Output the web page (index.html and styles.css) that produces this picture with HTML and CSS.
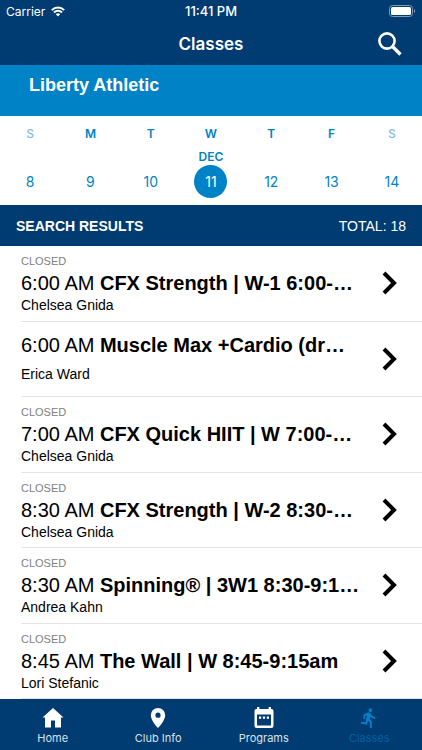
FILE: index.html
```html
<!DOCTYPE html>
<html lang="en">
<head>
    <meta charset="UTF-8">
    <meta name="viewport" content="width=device-width, initial-scale=1.0">
    <title>Classes</title>
    <link rel="stylesheet" href="styles.css">
</head>
<body>
    <header class="header">
        <div class="status">
            <div class="carrier">
                <span>Carrier</span>
                <svg width="14" height="11" viewBox="0 0 14 11" fill="none" stroke="#fff" stroke-width="2">
                    <path d="M0.8 4.1a8.8 8.8 0 0 1 12.4 0M3 6.5a5.6 5.6 0 0 1 8 0"/>
                    <path d="M7 10.6 4.8 8.3a3.2 3.2 0 0 1 4.4 0z" fill="#fff" stroke="none"/>
                </svg>
            </div>
            <span class="clock">11:41 PM</span>
            <svg class="battery" width="27" height="12" viewBox="0 0 27 12">
                <rect x="0.5" y="0.5" width="23" height="11" rx="3" fill="none" stroke="#7f9cb7"/>
                <rect x="2" y="2" width="20" height="8" rx="1.5" fill="#fff"/>
                <path d="M25 4c1.6.5 1.6 3.5 0 4z" fill="#7f9cb7"/>
            </svg>
        </div>
        <div class="titlebar">
            <h1>Classes</h1>
            <button class="search" type="button" aria-label="Search">
                <svg width="24" height="24" viewBox="0 0 24 24" fill="none" stroke="#fff">
                    <circle cx="9" cy="9" r="7.6" stroke-width="2.6"/>
                    <path d="M14.5 14.5 22.5 22.5" stroke-width="3.4"/>
                </svg>
            </button>
        </div>
    </header>

    <h2 class="club">Liberty Athletic</h2>

    <div class="week">
        <div class="day weekend"><span class="name">S</span><span class="month"></span><button type="button">8</button></div>
        <div class="day"><span class="name">M</span><span class="month"></span><button type="button">9</button></div>
        <div class="day"><span class="name">T</span><span class="month"></span><button type="button">10</button></div>
        <div class="day selected"><span class="name">W</span><span class="month">DEC</span><button type="button">11</button></div>
        <div class="day"><span class="name">T</span><span class="month"></span><button type="button">12</button></div>
        <div class="day"><span class="name">F</span><span class="month"></span><button type="button">13</button></div>
        <div class="day weekend"><span class="name">S</span><span class="month"></span><button type="button">14</button></div>
    </div>

    <div class="results">
        <h2>SEARCH RESULTS</h2>
        <span>TOTAL: 18</span>
    </div>

    <ul class="classes">
        <li>
            <div class="info">
                <p class="state">CLOSED</p>
                <p class="title">6:00 AM <b>CFX Strength | W-1 6:00-…</b></p>
                <p class="coach">Chelsea Gnida</p>
            </div>
            <svg class="chevron" viewBox="0 0 16 24"><path d="M2 2 12 12 2 22"/></svg>
        </li>
        <li class="open">
            <div class="info">
                <p class="title">6:00 AM <b>Muscle Max +Cardio (dr…</b></p>
                <p class="coach">Erica Ward</p>
            </div>
            <svg class="chevron" viewBox="0 0 16 24"><path d="M2 2 12 12 2 22"/></svg>
        </li>
        <li>
            <div class="info">
                <p class="state">CLOSED</p>
                <p class="title">7:00 AM <b>CFX Quick HIIT | W 7:00-…</b></p>
                <p class="coach">Chelsea Gnida</p>
            </div>
            <svg class="chevron" viewBox="0 0 16 24"><path d="M2 2 12 12 2 22"/></svg>
        </li>
        <li>
            <div class="info">
                <p class="state">CLOSED</p>
                <p class="title">8:30 AM <b>CFX Strength | W-2 8:30-…</b></p>
                <p class="coach">Chelsea Gnida</p>
            </div>
            <svg class="chevron" viewBox="0 0 16 24"><path d="M2 2 12 12 2 22"/></svg>
        </li>
        <li>
            <div class="info">
                <p class="state">CLOSED</p>
                <p class="title">8:30 AM <b>Spinning® | 3W1 8:30-9:1…</b></p>
                <p class="coach">Andrea Kahn</p>
            </div>
            <svg class="chevron" viewBox="0 0 16 24"><path d="M2 2 12 12 2 22"/></svg>
        </li>
        <li>
            <div class="info">
                <p class="state">CLOSED</p>
                <p class="title">8:45 AM <b>The Wall | W 8:45-9:15am</b></p>
                <p class="coach">Lori Stefanic</p>
            </div>
            <svg class="chevron" viewBox="0 0 16 24"><path d="M2 2 12 12 2 22"/></svg>
        </li>
    </ul>

    <nav class="tabs">
        <a href="#home">
            <svg viewBox="0 0 22 22"><path d="M11 1 0.5 10.5h2.5V20.5h6V13.5h4v7h6V10.5h2.5z"/></svg>
            Home
        </a>
        <a href="#club">
            <svg viewBox="0 0 22 22"><path fill-rule="evenodd" d="M11 1a7.2 7.2 0 0 0-7.2 7.2C3.8 13.6 11 21 11 21s7.2-7.4 7.2-12.8A7.2 7.2 0 0 0 11 1zm0 4.6a2.6 2.6 0 1 1 0 5.2 2.6 2.6 0 0 1 0-5.2z"/></svg>
            Club Info
        </a>
        <a href="#programs">
            <svg viewBox="0 0 22 22"><path fill-rule="evenodd" d="M4 0h2.4v2h9.2V0H18v2h.5a2 2 0 0 1 2 2v15a2 2 0 0 1-2 2h-15a2 2 0 0 1-2-2V4a2 2 0 0 1 2-2H4zM4 7.5v11h14v-11zM6 9.500h2.200v2.200H6zm3.900 0h2.200v2.200H9.900zm3.900 0H16v2.200h-2.200z"/></svg>
            Programs
        </a>
        <a href="#classes" class="active">
            <svg viewBox="0 0 24 24"><path d="M13.49 5.48c1.1 0 2-.9 2-2s-.9-2-2-2-2 .9-2 2 .9 2 2 2zm-3.6 13.9 1-4.4 2.1 2v6h2v-7.500l-2.1-2 .6-3c1.300 1.500 3.300 2.500 5.500 2.500v-2c-1.900 0-3.500-1-4.300-2.400l-1-1.600c-.4-.6-1-1-1.700-1-.3 0-.5.1-.8.1l-5.200 2.200v4.700h2v-3.400l1.800-.7-1.600 8.100-4.900-1-.4 2z"/></svg>
            Classes
        </a>
    </nav>
</body>
</html>
```

FILE: styles.css
```css
* {
    box-sizing: border-box;
}

body {
    margin: 0;
    min-height: 100vh;
    display: flex;
    flex-direction: column;
    font-family: 'Liberation Sans', Arial, sans-serif;
    background-color: #fff;
    color: #000;
}

h1, h2, p, ul {
    margin: 0;
    padding: 0;
}

button {
    padding: 0;
    border: none;
    background: none;
    font-family: inherit;
    color: inherit;
    cursor: pointer;
}

.header {
    background-color: #003b71;
    color: #fff;
    font-family: Inter, sans-serif;
}

.status, .titlebar {
    display: grid;
    grid-template-columns: 1fr auto 1fr;
    align-items: center;
}

.status {
    height: 22px;
    padding: 0 6px;
    font-size: 12px;
}

.carrier {
    display: flex;
    align-items: center;
    gap: 6px;
}

.clock {
    font-size: 13px;
    font-weight: 500;
}

.battery {
    justify-self: end;
}

.titlebar {
    height: 43px;
    padding: 0 20px;
}

.titlebar h1 {
    grid-column: 2;
    font-size: 17px;
    font-weight: 600;
}

.search {
    justify-self: end;
    height: 24px;
}

.club {
    height: 51px;
    padding: 10px 29px;
    background-color: #0083c6;
    color: #fff;
    font-size: 18px;
    line-height: 20px;
}

.week {
    height: 89px;
    padding-top: 9px;
    display: grid;
    grid-template-columns: repeat(7, 1fr);
    font-family: Inter, sans-serif;
    color: #0083c6;
}

.day {
    display: flex;
    flex-direction: column;
    align-items: center;
}

.name, .month {
    font-size: 12px;
    font-weight: 600;
    line-height: 18px;
}

.name {
    height: 23px;
}

.month {
    height: 17px;
}

.weekend .name {
    color: #7fbfe0;
    font-weight: 500;
}

.day button {
    width: 33px;
    height: 33px;
    border-radius: 50%;
    font-size: 14px;
}

.selected button {
    background-color: #0083c6;
    color: #fff;
}

.results {
    height: 41px;
    padding: 0 16px;
    display: flex;
    justify-content: space-between;
    align-items: center;
    background-color: #003b71;
    color: #fff;
    font-size: 14px;
}

.results h2 {
    font-size: 14px;
}

.classes {
    flex: 1;
    display: grid;
    grid-auto-rows: 1fr;
    list-style: none;
}

.classes li {
    min-width: 0;
    display: flex;
    align-items: center;
    justify-content: space-between;
    margin-left: 21px;
    padding-right: 24px;
    border-bottom: 1px solid #e4e4e6;
}

.info {
    min-width: 0;
}

.state {
    color: #808080;
    font-size: 11px;
    line-height: 16px;
}

.title {
    overflow: hidden;
    font-size: 20px;
    line-height: 28px;
    white-space: nowrap;
    text-overflow: ellipsis;
}

.coach {
    font-size: 14px;
    line-height: 16px;
}

.open .info {
    display: flex;
    flex-direction: column;
    gap: 7px;
    padding-bottom: 4px;
}

.chevron {
    flex: none;
    width: 16px;
    height: 24px;
    fill: none;
    stroke: #000;
    stroke-width: 4;
}

.tabs {
    height: 51px;
    padding-top: 8px;
    display: grid;
    grid-template-columns: repeat(4, 1fr);
    background-color: #003b71;
    font-family: Inter, sans-serif;
    font-size: 11px;
    line-height: 16px;
}

.tabs a {
    display: flex;
    flex-direction: column;
    align-items: center;
    gap: 1px;
    color: #d9e2ea;
    text-decoration: none;
}

.tabs svg {
    width: 22px;
    height: 22px;
    fill: #fff;
}

.tabs .active {
    color: #00609f;
}

.tabs .active svg {
    fill: #0083c6;
}
```
